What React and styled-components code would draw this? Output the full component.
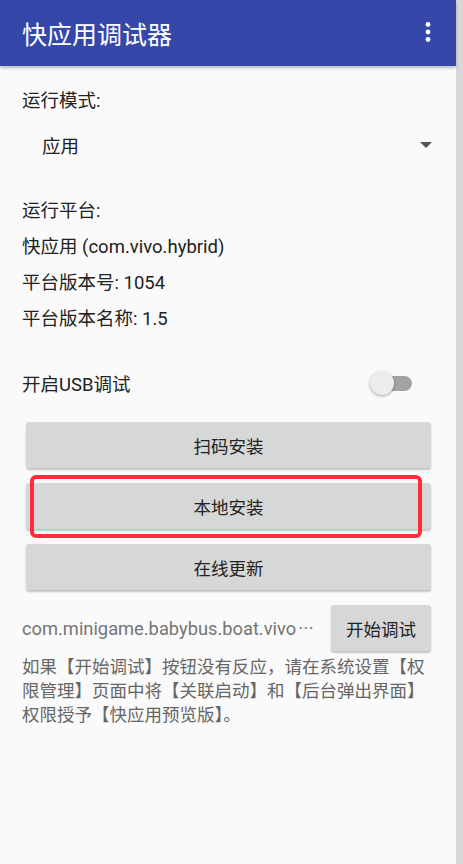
import React from 'react';
import styled, { createGlobalStyle } from 'styled-components';

const GlobalStyle = createGlobalStyle`
   html, body {
      margin: 0;
      padding: 0;
      background: #d8d8d8;
   }
   body {
      font-family: Roboto, "Noto Sans CJK SC", sans-serif;
      color: #212121;
   }
`;

const actions = ['扫码安装', '本地安装', '在线更新'];

const App = () => (
   <>
      <GlobalStyle />
      <Screen>
         <AppBar>
            <Title>快应用调试器</Title>
            <MenuButton aria-label="more">
               <svg width="8" height="22" viewBox="0 0 8 22">
                  <circle cx="4" cy="3.5" r="2.4" fill="#fff" />
                  <circle cx="4" cy="11" r="2.4" fill="#fff" />
                  <circle cx="4" cy="18.5" r="2.4" fill="#fff" />
               </svg>
            </MenuButton>
         </AppBar>

         <Content>
            <Label>运行模式:</Label>
            <Spinner>
               <span>应用</span>
               <Caret />
            </Spinner>

            <InfoBlock>
               <InfoLine>运行平台:</InfoLine>
               <InfoLine>快应用 (com.vivo.hybrid)</InfoLine>
               <InfoLine>平台版本号: 1054</InfoLine>
               <InfoLine>平台版本名称: 1.5</InfoLine>
            </InfoBlock>

            <SwitchRow>
               <span>开启USB调试</span>
               <Switch>
                  <Track />
                  <Thumb />
               </Switch>
            </SwitchRow>

            <ButtonStack>
               {actions.map((label) => (
                  <ButtonSlot key={label}>
                     <FlatButton>{label}</FlatButton>
                     {/* annotation drawn over the screenshot */}
                     {label === '本地安装' && <Highlight />}
                  </ButtonSlot>
               ))}
            </ButtonStack>

            <DebugRow>
               <PackageName>
                  com.minigame.babybus.boat.vivo<Dots>···</Dots>
               </PackageName>
               <FlatButton $compact>开始调试</FlatButton>
            </DebugRow>

            <Hint>
               如果【开始调试】按钮没有反应，请在系统设置【权限管理】页面中将【关联启动】和【后台弹出界面】权限授予【快应用预览版】。
            </Hint>
         </Content>
      </Screen>
   </>
);

export default App;

const Screen = styled.div`
   width: 456px;
   min-height: 864px;
   background: #fafafa;
   display: flex;
   flex-direction: column;
`;

const AppBar = styled.header`
   height: 66px;
   background: #3647aa;
   display: flex;
   align-items: center;
   justify-content: space-between;
   padding: 0 24px 0 22px;
   box-shadow: 0 2px 3px rgba(0, 0, 0, 0.25);
   position: relative;
   z-index: 1;
`;

const Title = styled.h1`
   margin: 0;
   font-size: 25px;
   font-weight: 400;
   color: #fff;
`;

const MenuButton = styled.div`
   display: flex;
   align-items: center;
   height: 22px;
   margin-top: -2px;
`;

const Content = styled.main`
   display: flex;
   flex-direction: column;
   padding: 22px 21px 0 22px;
`;

const Label = styled.div`
   font-size: 18.5px;
   line-height: 26px;
`;

const Spinner = styled.div`
   height: 62px;
   display: flex;
   align-items: center;
   justify-content: space-between;
   padding: 0 3px 0 20px;
   font-size: 18.5px;
`;

const Caret = styled.span`
   width: 0;
   height: 0;
   border-left: 6px solid transparent;
   border-right: 6px solid transparent;
   border-top: 6px solid #555;
`;

const InfoBlock = styled.div`
   margin-top: 17px;
   display: flex;
   flex-direction: column;
`;

const InfoLine = styled.div`
   font-size: 18.5px;
   line-height: 36px;
`;

const SwitchRow = styled.div`
   margin-top: 22px;
   height: 48px;
   display: flex;
   align-items: center;
   justify-content: space-between;
   font-size: 18.5px;
   padding-right: 23px;
`;

const Switch = styled.div`
   position: relative;
   width: 42px;
   height: 26px;
   display: flex;
   align-items: center;
`;

const Track = styled.div`
   margin-left: 6px;
   width: 36px;
   height: 15px;
   border-radius: 8px;
   background: #a3a3a3;
`;

const Thumb = styled.div`
   position: absolute;
   left: 0;
   top: 1px;
   width: 24px;
   height: 24px;
   border-radius: 50%;
   background: #ececec;
   box-shadow: 0 1px 3px rgba(0, 0, 0, 0.35);
`;

const ButtonStack = styled.div`
   margin-top: 15px;
   display: flex;
   flex-direction: column;
   gap: 15px;
`;

const ButtonSlot = styled.div`
   position: relative;
   margin: 0 4px;
`;

const FlatButton = styled.button`
   width: ${(p) => (p.$compact ? 'auto' : '100%')};
   height: 46px;
   padding: 0 ${(p) => (p.$compact ? '15px' : '0')};
   border: none;
   border-radius: 3px;
   background: #d6d7d7;
   box-shadow: 0 2px 2px rgba(0, 0, 0, 0.22);
   font-family: Roboto, "Noto Sans CJK SC", sans-serif;
   font-size: 17.5px;
   color: #222;
   flex-shrink: 0;
`;

const Highlight = styled.div`
   position: absolute;
   top: -8px;
   bottom: -9px;
   left: 4px;
   right: 9px;
   border: 4px solid #ff2d3c;
   border-radius: 6px;
   pointer-events: none;
`;

const DebugRow = styled.div`
   margin-top: 15px;
   display: flex;
   align-items: center;
   justify-content: space-between;
   padding-right: 4px;
`;

const PackageName = styled.div`
   font-size: 18.3px;
   color: #757575;
   white-space: nowrap;
   overflow: hidden;
`;

const Dots = styled.span`
   letter-spacing: 0.5px;
   margin-left: 2px;
`;

const Hint = styled.p`
   margin: 4px 0 0;
   font-size: 17.5px;
   line-height: 24px;
   color: #666;
`;
